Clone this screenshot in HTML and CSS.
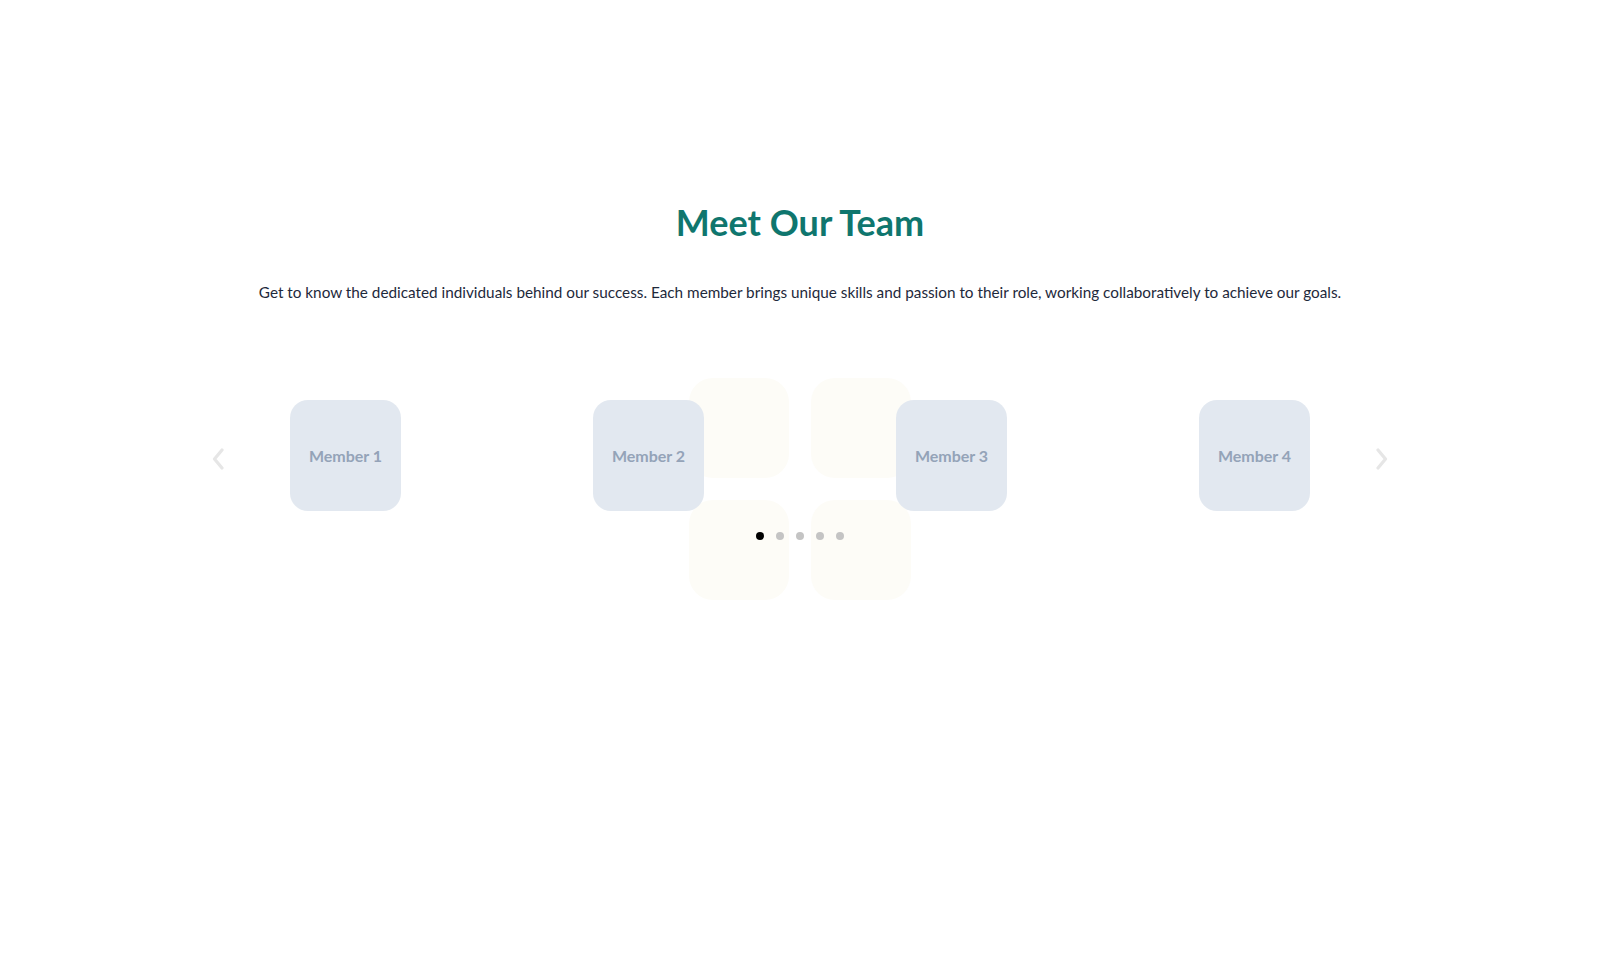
FILE: index.html
```html
<!DOCTYPE html>
<html lang="en">
<head>
<meta charset="UTF-8">
<meta name="viewport" content="width=device-width, initial-scale=1.0">
<title>Meet Our Team</title>
<link rel="stylesheet" href="styles.css">
</head>
<body>

<section id="team">
    <h2 class="team-title">Meet Our Team</h2>
    <p class="team-intro">Get to know the dedicated individuals behind our success. Each member brings unique skills and passion to their role, working collaboratively to achieve our goals.</p>

    <div class="team-slider">
        <div class="deco">
            <span></span><span></span><span></span><span></span>
        </div>

        <button class="arrow arrow-prev" aria-label="Previous">
            <svg width="12" height="22" viewBox="0 0 12 22"><path d="M10 2 L2.5 11 L10 20" fill="none" stroke="currentColor" stroke-width="3.2" stroke-linecap="round" stroke-linejoin="round"/></svg>
        </button>

        <div class="track">
            <div class="slide"><div class="member">Member 1</div></div>
            <div class="slide"><div class="member">Member 2</div></div>
            <div class="slide"><div class="member">Member 3</div></div>
            <div class="slide"><div class="member">Member 4</div></div>
        </div>

        <button class="arrow arrow-next" aria-label="Next">
            <svg width="12" height="22" viewBox="0 0 12 22"><path d="M2 2 L9.5 11 L2 20" fill="none" stroke="currentColor" stroke-width="3.2" stroke-linecap="round" stroke-linejoin="round"/></svg>
        </button>

        <ul class="dots">
            <li class="active"></li>
            <li></li>
            <li></li>
            <li></li>
            <li></li>
        </ul>
    </div>
</section>

</body>
</html>
```

FILE: styles.css
```css
body {
    margin: 0;
    padding: 0;
    background: #fff;
    font-family: Lato, "Noto Sans", sans-serif;
}
#team {
    padding: 200px 0 300px;
    text-align: center;
}
.team-title {
    margin: 0;
    font-size: 36px;
    line-height: 44px;
    font-weight: 700;
    color: #0f766e;
}
.team-intro {
    margin: 36px 0 0;
    font-size: 15.3px;
    line-height: 24px;
    color: #1e293b;
}
.team-slider {
    position: relative;
    width: 1212px;
    margin: 96px auto 0;
}
.deco {
    position: absolute;
    left: 495px;
    top: -22px;
    display: grid;
    grid-template-columns: 100px 100px;
    grid-template-rows: 100px 100px;
    gap: 22px;
    z-index: 0;
}
.deco span {
    display: block;
    border-radius: 24px;
    background: #fdfcf7;
}
.track {
    position: relative;
    z-index: 1;
    display: flex;
}
.slide {
    flex: 1;
    display: flex;
    justify-content: center;
}
.member {
    width: 111px;
    height: 111px;
    border-radius: 18px;
    background: #e2e8f0;
    color: #94a3b8;
    font-weight: 700;
    font-size: 16px;
    display: flex;
    align-items: center;
    justify-content: center;
}
.arrow {
    position: absolute;
    top: 47px;
    z-index: 2;
    width: 24px;
    height: 24px;
    padding: 0;
    border: none;
    background: none;
    color: #e6e6e6;
    display: flex;
    align-items: center;
    justify-content: center;
    cursor: pointer;
}
.arrow-prev {
    left: 12px;
}
.arrow-next {
    right: 12px;
}
.dots {
    position: relative;
    z-index: 1;
    list-style: none;
    margin: 21px 0 0;
    padding: 0;
    display: flex;
    justify-content: center;
    gap: 12px;
}
.dots li {
    width: 8px;
    height: 8px;
    border-radius: 50%;
    background: #c4c4c4;
}
.dots li.active {
    background: #000;
}
```
